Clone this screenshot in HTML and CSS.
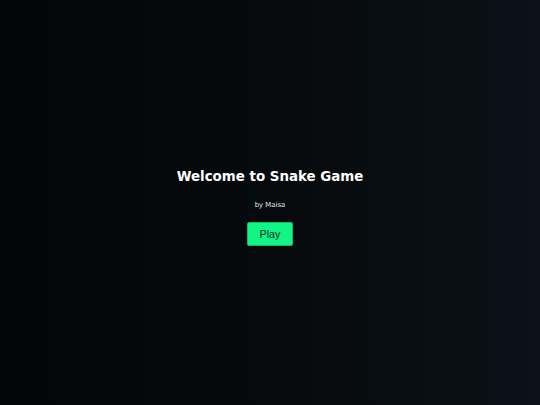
FILE: index.html
```html
<!DOCTYPE html>
<html>
<head>
<meta charset="utf-8">
<link rel="stylesheet" href="styles.css">
</head>
<body>
<main class="screen">
  <h1 class="title">Welcome to Snake Game</h1>
  <p class="author">by Maisa</p>
  <button class="play">Play</button>
</main>
</body>
</html>
```

FILE: styles.css
```css
html, body {
  margin: 0;
  padding: 0;
  height: 100%;
}
body {
  background: linear-gradient(to right, #030606 0%, #060a0c 50%, #0a0f14 85%, #0c111a 100%);
  font-family: "DejaVu Sans", Verdana, sans-serif;
  color: #ffffff;
}
.screen {
  height: 100%;
  display: flex;
  flex-direction: column;
  align-items: center;
  justify-content: center;
  padding-top: 10px;
  box-sizing: border-box;
}
.title {
  margin: 0;
  font-size: 13.4px;
  line-height: 16px;
  font-weight: bold;
  color: #ffffff;
}
.author {
  margin: 16px 0 0;
  font-size: 6.9px;
  line-height: 8px;
  color: #e8e8e8;
}
.play {
  margin-top: 13px;
  width: 46px;
  height: 24px;
  padding: 0;
  background: #11f586;
  border: 1px solid #0bb866;
  border-radius: 2px;
  font-family: "Liberation Sans", Arial, sans-serif;
  font-size: 10.7px;
  color: #0b2a1a;
}
```
